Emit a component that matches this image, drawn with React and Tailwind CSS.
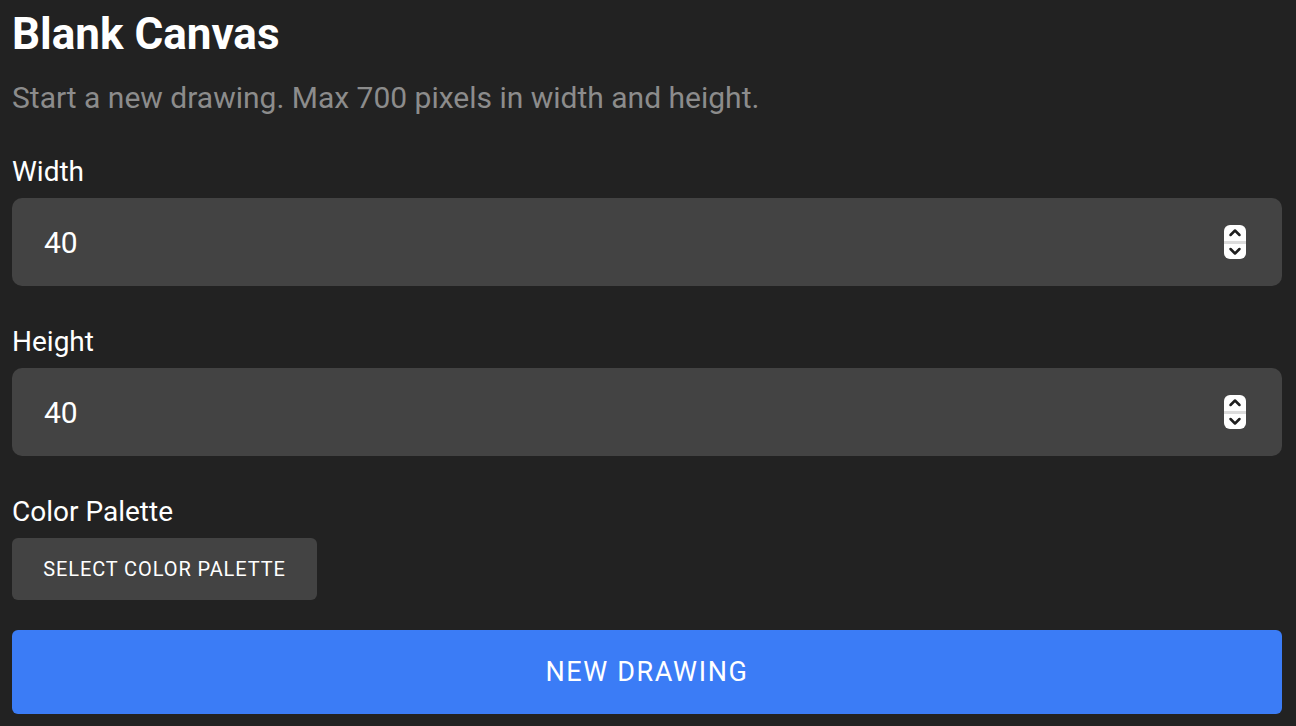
import React from 'react';

const Spinner = () => (
    <div className="w-[22px] h-[34px] rounded-[6px] bg-white flex flex-col overflow-hidden">
        <div className="flex-1 flex items-center justify-center">
            <svg width="14" height="9" viewBox="0 0 14 9" fill="none" stroke="#1e1e1e" strokeWidth="2.5" strokeLinecap="round" strokeLinejoin="round"><path d="M2.5 7l4.5-4.5 4.5 4.5" /></svg>
        </div>
        <div className="h-[3px] bg-[#dcdcdc]" />
        <div className="flex-1 flex items-center justify-center">
            <svg width="14" height="9" viewBox="0 0 14 9" fill="none" stroke="#1e1e1e" strokeWidth="2.5" strokeLinecap="round" strokeLinejoin="round"><path d="M2.5 2l4.5 4.5 4.5-4.5" /></svg>
        </div>
    </div>
);

const NumberField = ({ label, value }) => (
    <div className="flex flex-col">
        <label className="text-[28px] leading-[36px] text-white mt-[10px] mb-[8px]">{label}</label>
        <div className="h-[88px] rounded-[10px] bg-[#434343] flex items-center justify-between pl-[32px] pr-[36px]">
            <span className="text-[30px] text-white">{value}</span>
            <Spinner />
        </div>
    </div>
);

const App = () => {
    return (
        <div className="min-h-[726px] bg-[#222222] pl-[12px] pr-[14px] pt-[10px] font-['Roboto',sans-serif]">
            <h1 className="text-[44px] leading-[48px] font-bold text-white">Blank Canvas</h1>
            <p className="text-[30px] leading-[36px] text-[#8c8c8c] mt-[22px]">Start a new drawing. Max 700 pixels in width and height.</p>
            <div className="mt-[28px]">
                <NumberField label="Width" value="40" />
            </div>
            <div className="mt-[28px]">
                <NumberField label="Height" value="40" />
            </div>
            <div className="flex flex-col mt-[38px]">
                <span className="text-[28px] leading-[36px] text-white">Color Palette</span>
                <button className="mt-[8px] w-[305px] h-[62px] rounded-[6px] bg-[#434343] text-white text-[20px] font-normal tracking-[0.045em] uppercase">
                    Select Color Palette
                </button>
            </div>
            <button className="mt-[30px] w-full h-[84px] rounded-[6px] bg-[#3b7cf6] text-white text-[27px] font-normal tracking-[0.06em] uppercase">
                New Drawing
            </button>
        </div>
    );
};

export default App;
